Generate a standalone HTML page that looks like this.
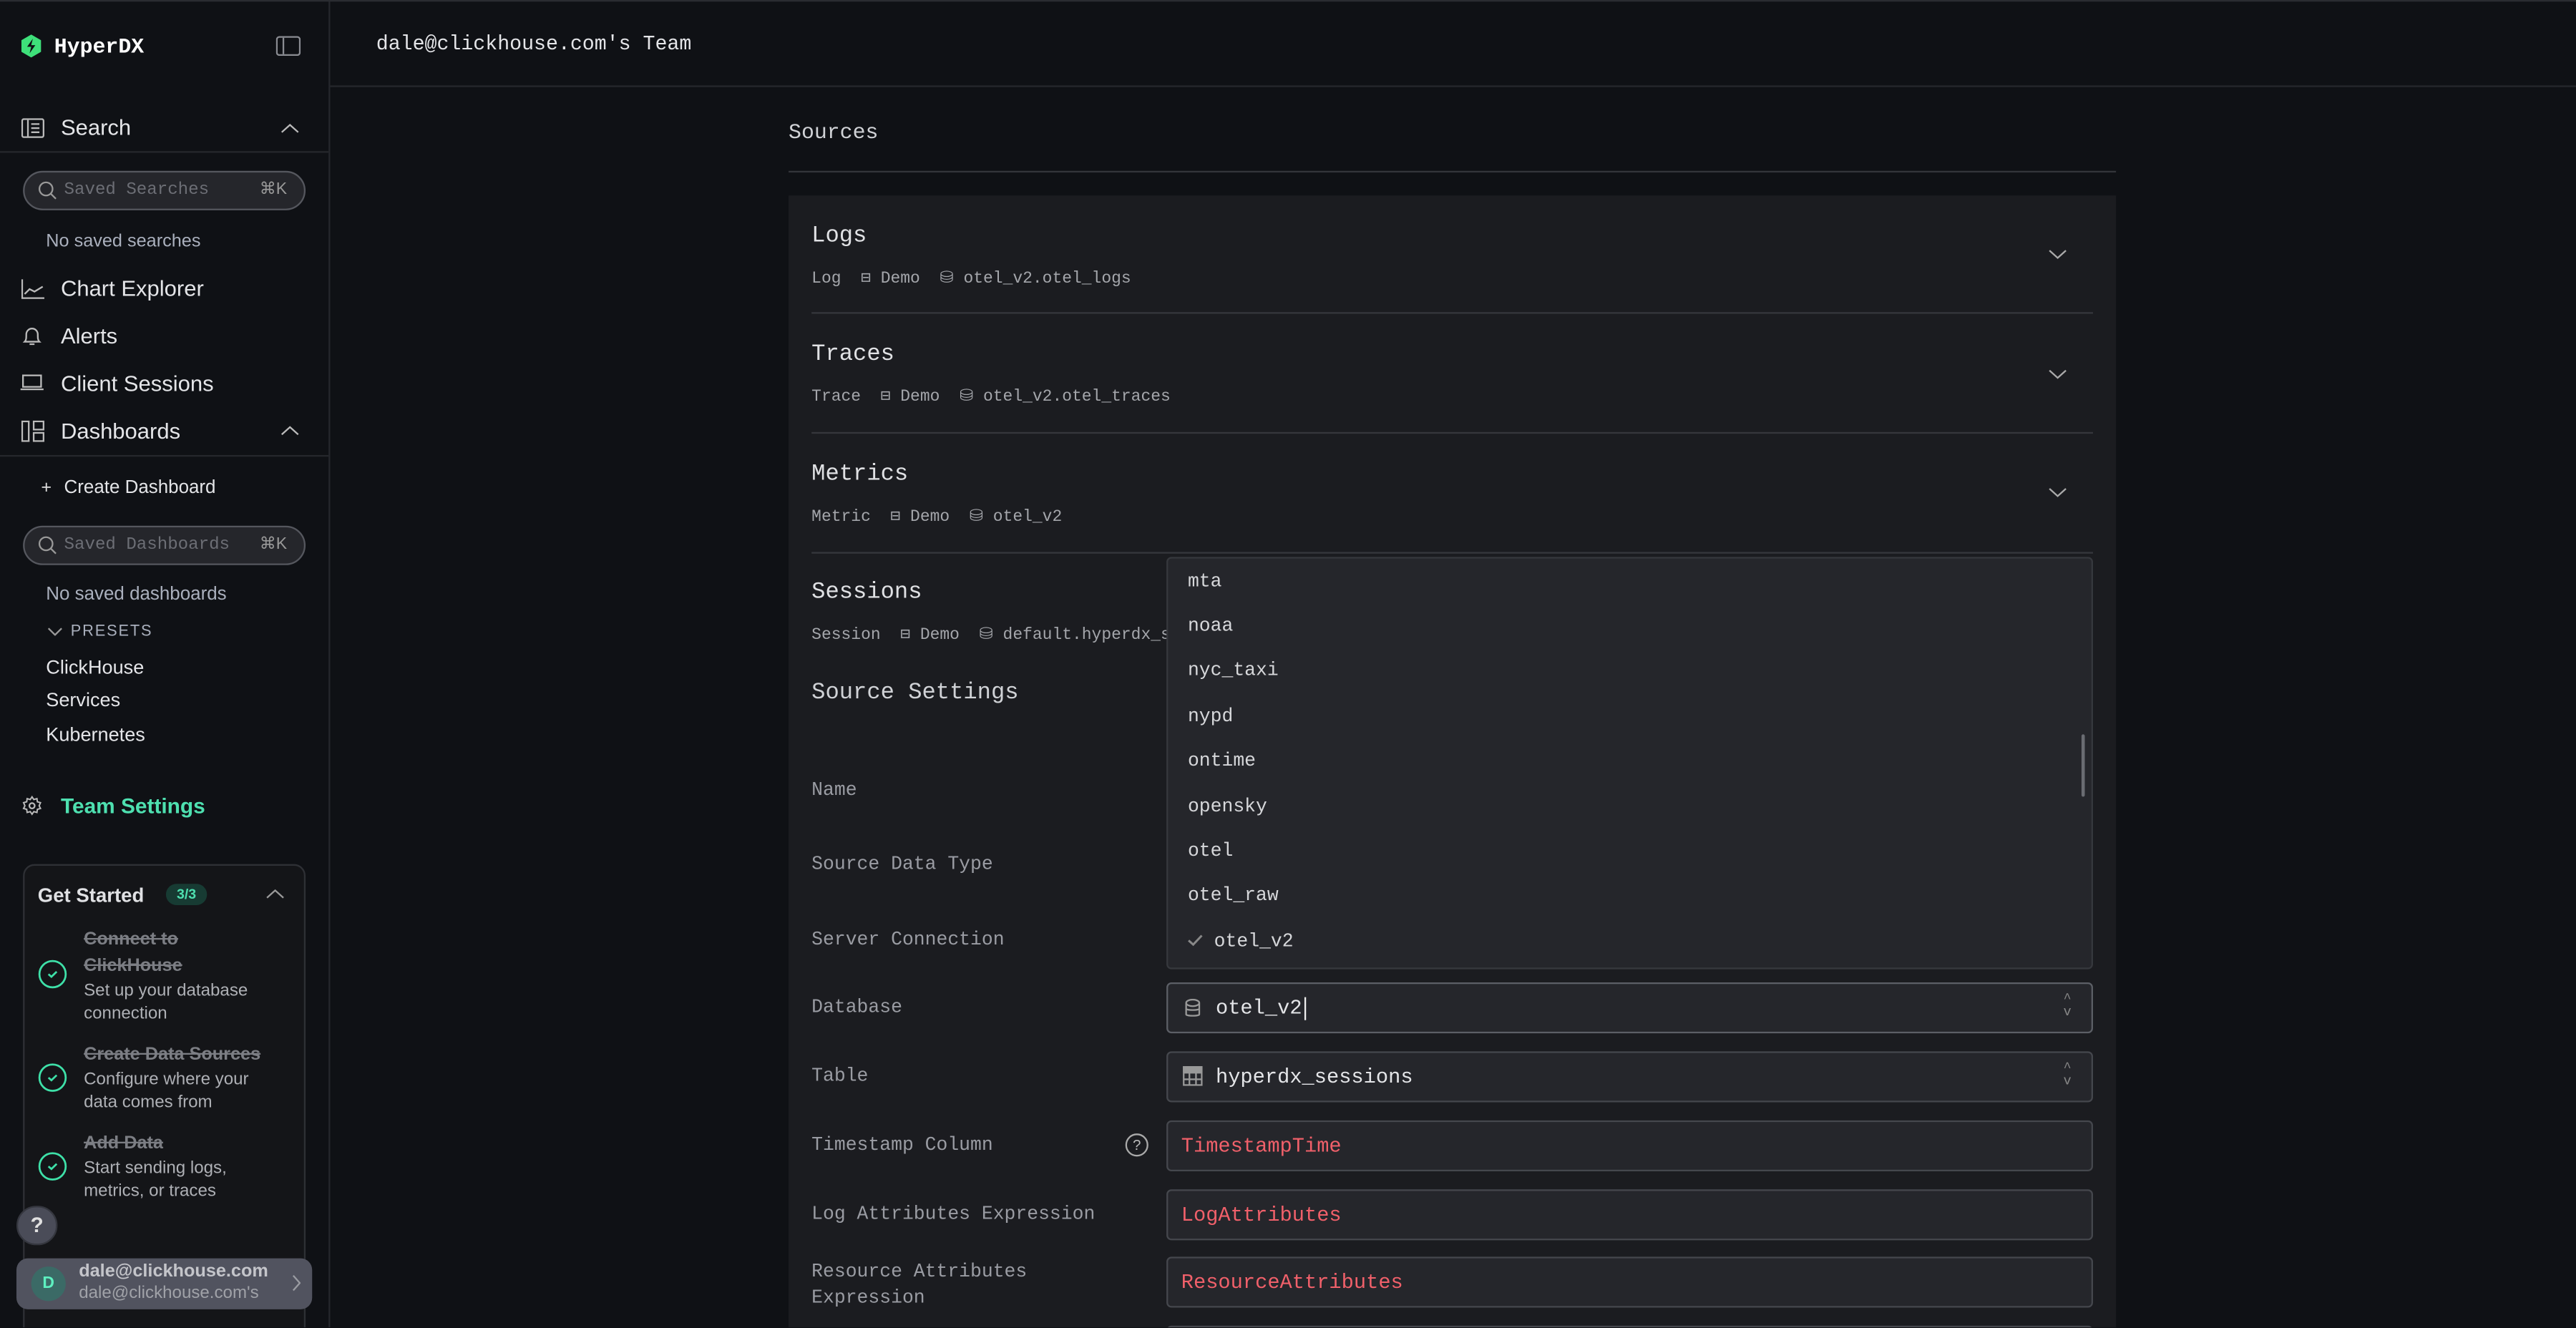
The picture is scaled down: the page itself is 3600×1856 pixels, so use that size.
<!DOCTYPE html>
<html><head><meta charset="utf-8">
<style>
*{box-sizing:border-box;margin:0;padding:0}
html,body{width:3600px;height:1856px;overflow:hidden;background:#0f1115}
#s{position:absolute;left:0;top:0;width:1568px;height:808px;overflow:hidden;transform:scale(2.29592);transform-origin:0 0;background:#0f1115;font-family:"Liberation Sans",sans-serif;color:#d0d2d6}
.a{position:absolute;white-space:nowrap}
.m{font-family:"Liberation Mono",monospace}
.nav{font-size:13.5px;color:#e4e5e8}
.ic{position:absolute}
svg{display:block}
.card{position:absolute;left:480px;top:119px;width:808px;height:700px;background:#1b1c20}
.t{font-family:"Liberation Mono",monospace;font-size:14px;color:#e0e1e4}
.sub{font-family:"Liberation Mono",monospace;font-size:10px;color:#a4a6ab}
.lbl{font-family:"Liberation Mono",monospace;font-size:11.5px;color:#9a9ca3}
.inp{position:absolute;left:710px;width:564px;height:31px;background:#25262b;border:1px solid #45474d;border-radius:3px;font-family:"Liberation Mono",monospace;font-size:12.5px}
.red{color:#f0606a;position:absolute;left:8px;top:7px}
.dd{font-family:"Liberation Mono",monospace;font-size:11.5px;color:#d6d7da;left:723px}
</style></head><body><div id="s">
<!-- sidebar -->
<div class="a" style="left:200px;top:0;width:1px;height:808px;background:#25272c"></div>
<div class="a" style="left:0;top:0;width:1568px;height:1px;background:#2a2c31"></div>
<svg class="ic" style="left:13px;top:21px" width="12" height="14" viewBox="0 0 12 14"><path d="M6 0L12 3.5V10.5L6 14L0 10.5V3.5Z" fill="#3ee07a"/><path d="M7 2.5L3.5 7.5H6L5 11.5L8.5 6.5H6Z" fill="#0f1115"/></svg>
<div class="a m" style="left:33px;top:21px;font-size:13px;font-weight:bold;color:#fff">HyperDX</div>
<svg class="ic" style="left:168px;top:22px" width="15" height="12"><rect x=".5" y=".5" width="14" height="11" rx="1.5" fill="none" stroke="#8a8c92"/><line x1="4.5" y1="1" x2="4.5" y2="11" stroke="#8a8c92"/></svg>

<svg class="ic" style="left:13px;top:72px" width="14" height="12"><rect x=".5" y=".5" width="13" height="11" rx="1" fill="none" stroke="#bbb"/><path d="M4 1V11M6 3.5H11M6 6H11M6 8.5H11" stroke="#bbb"/></svg>
<div class="a nav" style="left:37px;top:70px">Search</div>
<svg class="ic" style="left:171px;top:75px" width="11" height="6"><path d="M.5 5.5L5.5 1L10.5 5.5" fill="none" stroke="#bbb"/></svg>
<div class="a" style="left:0;top:92px;width:200px;height:1px;background:#25272c"></div>
<div class="a" style="left:14px;top:104px;width:172px;height:24px;border:1px solid #55575e;border-radius:12px;background:#25262b"></div>
<svg class="ic" style="left:23px;top:110px" width="12" height="12"><circle cx="5" cy="5" r="4" fill="none" stroke="#999"/><line x1="8" y1="8" x2="11" y2="11" stroke="#999"/></svg>
<div class="a m" style="left:39px;top:110px;font-size:10.5px;color:#6c6e75">Saved Searches</div>
<div class="a" style="left:158px;top:110px;font-size:10px;color:#999">⌘K</div>
<div class="a" style="left:28px;top:141px;font-size:11px;color:#aab0bd">No saved searches</div>
<svg class="ic" style="left:13px;top:170px" width="14" height="12"><path d="M.5 0V11.5H14M2 9L5 6L8 7.5L13 4.5" fill="none" stroke="#bbb"/></svg>
<div class="a nav" style="left:37px;top:168px">Chart Explorer</div>
<svg class="ic" style="left:13px;top:198px" width="13" height="13"><path d="M2 10C3 9 3 8 3 5.5A3.5 3.5 0 0 1 10 5.5C10 8 10 9 11 10Z M5 11.5H8" fill="none" stroke="#bbb"/></svg>
<div class="a nav" style="left:37px;top:197px">Alerts</div>
<svg class="ic" style="left:12px;top:228px" width="15" height="10"><rect x="2" y=".5" width="11" height="7" fill="none" stroke="#bbb"/><line x1=".5" y1="9" x2="14.5" y2="9" stroke="#bbb"/></svg>
<div class="a nav" style="left:37px;top:226px">Client Sessions</div>
<svg class="ic" style="left:13px;top:256px" width="14" height="13"><rect x=".5" y=".5" width="4" height="12" fill="none" stroke="#bbb"/><rect x="7.5" y=".5" width="6" height="5" fill="none" stroke="#bbb"/><rect x="7.5" y="7.5" width="6" height="5" fill="none" stroke="#bbb"/></svg>
<div class="a nav" style="left:37px;top:255px">Dashboards</div>
<svg class="ic" style="left:171px;top:259px" width="11" height="6"><path d="M.5 5.5L5.5 1L10.5 5.5" fill="none" stroke="#bbb"/></svg>
<div class="a" style="left:0;top:277px;width:200px;height:1px;background:#25272c"></div>
<div class="a" style="left:25px;top:291px;font-size:11px;color:#ddd">+</div>
<div class="a" style="left:39px;top:291px;font-size:11.3px;color:#e4e5e8">Create Dashboard</div>
<div class="a" style="left:14px;top:320px;width:172px;height:24px;border:1px solid #55575e;border-radius:12px;background:#25262b"></div>
<svg class="ic" style="left:23px;top:326px" width="12" height="12"><circle cx="5" cy="5" r="4" fill="none" stroke="#999"/><line x1="8" y1="8" x2="11" y2="11" stroke="#999"/></svg>
<div class="a m" style="left:39px;top:326px;font-size:10.5px;color:#6c6e75">Saved Dashboards</div>
<div class="a" style="left:158px;top:326px;font-size:10px;color:#999">⌘K</div>
<div class="a" style="left:28px;top:356px;font-size:11.3px;color:#aab0bd">No saved dashboards</div>
<svg class="ic" style="left:29px;top:382px" width="9" height="5"><path d="M.5 .5L4.5 4.5L8.5 .5" fill="none" stroke="#999"/></svg>
<div class="a" style="left:43px;top:379px;font-size:9.5px;color:#aab0bd;letter-spacing:.8px">PRESETS</div>
<div class="a" style="left:28px;top:399px;font-size:11.8px;color:#e4e5e8">ClickHouse</div>
<div class="a" style="left:28px;top:419px;font-size:11.8px;color:#e4e5e8">Services</div>
<div class="a" style="left:28px;top:440px;font-size:11.8px;color:#e4e5e8">Kubernetes</div>
<svg class="ic" style="left:13px;top:484px" width="13" height="13" viewBox="0 0 24 24"><circle cx="12" cy="12" r="3" fill="none" stroke="#bbb" stroke-width="1.8"/><path d="M12 2l2 3 3.5-1 .5 3.5 3.5 1-1.5 3.5 1.5 3-3.5 1-.5 3.5-3.5-1-2 3-2-3-3.5 1-.5-3.5-3.5-1 1.5-3-1.5-3.5 3.5-1 .5-3.5 3.5 1z" fill="none" stroke="#bbb" stroke-width="1.6"/></svg>
<div class="a" style="left:37px;top:483px;font-size:13px;font-weight:bold;color:#4ee0b0">Team Settings</div>

<div class="a" style="left:14px;top:526px;width:172px;height:300px;border:1px solid #2e3035;border-radius:7px;background:#141518"></div>
<div class="a" style="left:23px;top:538px;font-size:12px;font-weight:bold;color:#e0e1e4">Get Started</div>
<div class="a" style="left:101px;top:538px;width:25px;height:13px;border-radius:7px;background:#173b33;color:#4ee0b0;font-size:8.5px;font-weight:bold;text-align:center;line-height:13px">3/3</div>
<svg class="ic" style="left:162px;top:541px" width="11" height="6"><path d="M.5 5.5L5.5 1L10.5 5.5" fill="none" stroke="#999"/></svg>
<svg class="ic" style="left:23px;top:584px" width="18" height="18"><circle cx="9" cy="9" r="8" fill="none" stroke="#3ee0a8" stroke-width="1.2"/><path d="M6.5 9L8.3 10.6L11.5 7.5" fill="none" stroke="#3ee0a8" stroke-width="1.2"/></svg>
<svg class="ic" style="left:23px;top:647px" width="18" height="18"><circle cx="9" cy="9" r="8" fill="none" stroke="#3ee0a8" stroke-width="1.2"/><path d="M6.5 9L8.3 10.6L11.5 7.5" fill="none" stroke="#3ee0a8" stroke-width="1.2"/></svg>
<svg class="ic" style="left:23px;top:701px" width="18" height="18"><circle cx="9" cy="9" r="8" fill="none" stroke="#3ee0a8" stroke-width="1.2"/><path d="M6.5 9L8.3 10.6L11.5 7.5" fill="none" stroke="#3ee0a8" stroke-width="1.2"/></svg>
<div class="a" style="left:51px;top:564px;font-size:11px;line-height:16px;color:#7c7e84;text-decoration:line-through;font-weight:bold">Connect to<br>ClickHouse</div>
<div class="a" style="left:51px;top:596px;font-size:10.5px;line-height:14px;color:#aeb0b5">Set up your database<br>connection</div>
<div class="a" style="left:51px;top:634px;font-size:11px;line-height:16px;color:#7c7e84;text-decoration:line-through;font-weight:bold">Create Data Sources</div>
<div class="a" style="left:51px;top:650px;font-size:10.5px;line-height:14px;color:#aeb0b5">Configure where your<br>data comes from</div>
<div class="a" style="left:51px;top:688px;font-size:11px;line-height:16px;color:#7c7e84;text-decoration:line-through;font-weight:bold">Add Data</div>
<div class="a" style="left:51px;top:704px;font-size:10.5px;line-height:14px;color:#aeb0b5">Start sending logs,<br>metrics, or traces</div>
<div class="a" style="left:10px;top:734px;width:25px;height:24px;border-radius:12px;background:#4a4c58;border:1px solid #35373f;color:#e0e0e0;font-size:13px;font-weight:bold;text-align:center;line-height:22px">?</div>
<div class="a" style="left:10px;top:766px;width:180px;height:31px;border-radius:7px;background:#51535f"></div>
<div class="a" style="left:19px;top:771px;width:21px;height:21px;border-radius:11px;background:#3b6a66;color:#5ef0c0;font-size:10px;font-weight:bold;text-align:center;line-height:21px">D</div>
<div class="a" style="left:48px;top:768px;font-size:11px;font-weight:bold;color:#c4c5ca">dale@clickhouse.com</div>
<div class="a" style="left:48px;top:781px;font-size:10.5px;color:#a0a2a8">dale@clickhouse.com's</div>
<svg class="ic" style="left:178px;top:776px" width="5" height="10"><path d="M.5 .5L4.5 5L.5 9.5" fill="none" stroke="#9a9ca2"/></svg>

<!-- header -->
<div class="a m" style="left:229px;top:20px;font-size:12.3px;color:#e4e5e8">dale@clickhouse.com's Team</div>
<div class="a" style="left:201px;top:52px;width:1367px;height:1px;background:#25272c"></div>
<div class="a m" style="left:480px;top:73px;font-size:13px;color:#d0d2d6">Sources</div>
<div class="a" style="left:480px;top:104px;width:808px;height:1px;background:#33353a"></div>

<div class="card"></div>
<div class="a t" style="left:494px;top:136px">Logs</div>
<div class="a sub" style="left:494px;top:164px">Log <span style="margin-left:6px">⊟</span> Demo <span style="margin-left:6px">⛁</span> otel_v2.otel_logs</div>
<div class="a" style="left:494px;top:190px;width:780px;height:1px;background:#35373c"></div>
<div class="a t" style="left:494px;top:208px">Traces</div>
<div class="a sub" style="left:494px;top:236px">Trace <span style="margin-left:6px">⊟</span> Demo <span style="margin-left:6px">⛁</span> otel_v2.otel_traces</div>
<div class="a" style="left:494px;top:263px;width:780px;height:1px;background:#35373c"></div>
<div class="a t" style="left:494px;top:281px">Metrics</div>
<div class="a sub" style="left:494px;top:309px">Metric <span style="margin-left:6px">⊟</span> Demo <span style="margin-left:6px">⛁</span> otel_v2</div>
<div class="a" style="left:494px;top:336px;width:780px;height:1px;background:#35373c"></div>
<div class="a t" style="left:494px;top:353px">Sessions</div>
<div class="a sub" style="left:494px;top:381px">Session <span style="margin-left:6px">⊟</span> Demo <span style="margin-left:6px">⛁</span> default.hyperdx_s</div>
<svg class="ic" style="left:1247px;top:152px" width="11" height="6"><path d="M.5 .5L5.5 5L10.5 .5" fill="none" stroke="#aaa"/></svg>
<svg class="ic" style="left:1247px;top:225px" width="11" height="6"><path d="M.5 .5L5.5 5L10.5 .5" fill="none" stroke="#aaa"/></svg>
<svg class="ic" style="left:1247px;top:297px" width="11" height="6"><path d="M.5 .5L5.5 5L10.5 .5" fill="none" stroke="#aaa"/></svg>

<div class="a t" style="left:494px;top:414px;color:#d0d2d6">Source Settings</div>
<div class="a lbl" style="left:494px;top:475px">Name</div>
<div class="a lbl" style="left:494px;top:520px">Source Data Type</div>
<div class="a lbl" style="left:494px;top:566px">Server Connection</div>
<div class="a lbl" style="left:494px;top:607px">Database</div>
<div class="a lbl" style="left:494px;top:649px">Table</div>
<div class="a lbl" style="left:494px;top:691px">Timestamp Column</div>
<div class="a" style="left:685px;top:690px;width:14px;height:14px;border:1px solid #aaa;border-radius:7px;font-size:9px;color:#bbb;text-align:center;line-height:12px">?</div>
<div class="a lbl" style="left:494px;top:733px">Log Attributes Expression</div>
<div class="a lbl" style="left:494px;top:767px;line-height:16px">Resource Attributes<br>Expression</div>

<div class="inp" style="top:598px;border-color:#5c5f66"><svg class="ic" style="left:10px;top:9px" width="10" height="12"><ellipse cx="5" cy="2.5" rx="4" ry="2" fill="none" stroke="#999"/><path d="M1 2.5V9.5C1 10.6 9 10.6 9 9.5V2.5M1 6C1 7.1 9 7.1 9 6" fill="none" stroke="#999"/></svg><span class="a" style="left:29px;top:8px;color:#e4e5e8">otel_v2<span style="border-left:1px solid #eee;margin-left:1px"></span></span><span class="a" style="left:545px;top:6px;font-size:8px;color:#888;line-height:8px">^<br>v</span></div>
<div class="inp" style="top:640px"><svg class="ic" style="left:9px;top:8px" width="12" height="12"><rect x=".5" y=".5" width="11" height="11" fill="none" stroke="#999"/><path d="M.5 4H11.5M.5 8H11.5M4 4V11.5M8 4V11.5" stroke="#999"/><rect x="0" y="0" width="12" height="4" fill="#999"/></svg><span class="a" style="left:29px;top:8px;color:#e4e5e8">hyperdx_sessions</span><span class="a" style="left:545px;top:6px;font-size:8px;color:#888;line-height:8px">^<br>v</span></div>
<div class="inp" style="top:682px"><span class="red" style="top:8px">TimestampTime</span></div>
<div class="inp" style="top:724px"><span class="red" style="top:8px">LogAttributes</span></div>
<div class="inp" style="top:765px"><span class="red" style="top:8px">ResourceAttributes</span></div>
<div class="inp" style="top:807px"></div>

<!-- dropdown -->
<div class="a" style="left:710px;top:339px;width:564px;height:251px;background:#25262b;border:1px solid #36383d;border-radius:3px"></div>
<div class="a" style="left:1267px;top:447px;width:2px;height:38px;background:#6a6c72;border-radius:1px"></div>
<div class="a dd" style="top:348px">mta</div>
<div class="a dd" style="top:375px">noaa</div>
<div class="a dd" style="top:402px">nyc_taxi</div>
<div class="a dd" style="top:430px">nypd</div>
<div class="a dd" style="top:457px">ontime</div>
<div class="a dd" style="top:485px">opensky</div>
<div class="a dd" style="top:512px">otel</div>
<div class="a dd" style="top:539px">otel_raw</div>
<svg class="ic" style="left:723px;top:569px" width="9" height="7"><path d="M.5 3.5L3.3 6L8.5 .5" fill="none" stroke="#888" stroke-width="1.3"/></svg>
<div class="a dd" style="top:567px;left:739px">otel_v2</div>
</div></body></html>
